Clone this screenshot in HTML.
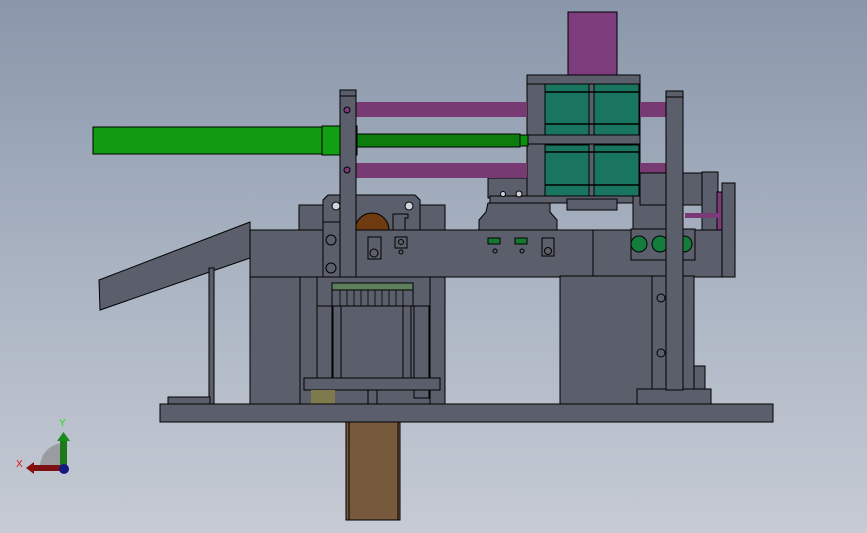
<!DOCTYPE html>
<html><head><meta charset="utf-8"><style>
html,body{margin:0;padding:0;width:867px;height:533px;overflow:hidden}
body{background:linear-gradient(#8a97aa 0%,#a9b3c2 50%,#c6cbd4 100%)}
svg{display:block}
</style></head><body>
<svg width="867" height="533" viewBox="0 0 867 533" xmlns="http://www.w3.org/2000/svg">
<g stroke="#000" stroke-width="1" fill="#5b5f6b">
<!-- top magenta block -->
<rect x="568" y="12" width="49" height="64" fill="#7d3d7c"/>
<!-- hopper back box -->
<rect x="488" y="178" width="45" height="20"/>
<!-- stack frame -->
<rect x="527" y="75" width="113" height="123"/>
<rect x="527" y="75" width="113" height="9"/>
<rect x="527" y="135" width="113" height="9"/>
<rect x="545" y="84" width="44" height="51" fill="#197560"/>
<rect x="594" y="84" width="45" height="51" fill="#197560"/>
<rect x="545" y="145" width="44" height="52" fill="#197560"/>
<rect x="594" y="145" width="45" height="52" fill="#197560"/>
<g stroke-width="1.5"><line x1="545" y1="92" x2="639" y2="92"/><line x1="545" y1="124" x2="639" y2="124"/><line x1="545" y1="152" x2="639" y2="152"/><line x1="545" y1="185" x2="639" y2="185"/></g>
<!-- purple rods -->
<rect x="355" y="102" width="172" height="15" fill="#783a72" stroke="none"/>
<rect x="640" y="102" width="26" height="15" fill="#783a72" stroke="none"/>
<rect x="355" y="163" width="172" height="15" fill="#783a72" stroke="none"/>
<rect x="640" y="163" width="26" height="15" fill="#783a72" stroke="none"/>
<!-- green cylinder -->
<rect x="93" y="127" width="229" height="27" fill="#119a12"/>
<rect x="322" y="126" width="35" height="29" fill="#11a012"/>
<rect x="357" y="134" width="163" height="13" fill="#0c7d0c"/>
<rect x="520" y="135" width="8" height="11" fill="#0c900c"/>
<!-- upper housing left -->
<rect x="299" y="205" width="24" height="25"/>
<rect x="415" y="205" width="30" height="25"/>
<path d="M323 230 V200 L328 195 H415 L420 200 V230Z"/>
<path d="M355 230 A17 17 0 0 1 389 230Z" fill="#6e3a10"/>
<path d="M393 214 H408 V218 H405 V230 H393Z"/>
<circle cx="336" cy="206" r="4" fill="#cfd3da"/><circle cx="409" cy="206" r="4" fill="#cfd3da"/>
<!-- hopper -->
<rect x="490" y="196" width="150" height="7"/>
<rect x="567" y="199" width="50" height="11"/>
<path d="M488 203 H550 L550 212 L557 220 V230 H479 V220 L486 212Z"/>
<circle cx="503" cy="194" r="2.5" fill="#cfd3da"/><circle cx="519" cy="194" r="3" fill="#cfd3da"/>
<!-- right mechanism -->
<rect x="633" y="196" width="50" height="34"/>
<rect x="640" y="173" width="67" height="32"/>
<rect x="702" y="172" width="16" height="58"/>
<rect x="722" y="183" width="13" height="94"/>
<rect x="717" y="192" width="5" height="40" fill="#7a3a78"/>
<rect x="685" y="213" width="33" height="5" fill="#7a3a78" stroke="none"/>
<!-- main beam -->
<rect x="250" y="230" width="343" height="47"/>
<rect x="593" y="230" width="129" height="47"/>
<rect x="631" y="229" width="64" height="31"/>
<circle cx="639" cy="244" r="8" fill="#147d3c"/><circle cx="660" cy="244" r="8" fill="#147d3c"/><circle cx="684" cy="244" r="8" fill="#147d3c"/>
<rect x="368" y="237" width="13" height="22"/><circle cx="374" cy="253" r="4"/>
<rect x="395" y="237" width="12" height="11"/><circle cx="401" cy="242" r="2.5"/><circle cx="401" cy="252" r="2"/>
<rect x="488" y="238" width="12" height="6" fill="#157a30"/><rect x="515" y="238" width="12" height="6" fill="#157a30"/>
<circle cx="495" cy="251" r="2"/><circle cx="522" cy="251" r="2"/>
<rect x="542" y="238" width="12" height="18"/><circle cx="548" cy="251" r="3.5"/>
<!-- chute -->
<path d="M99 280 L250 222 V258 L100 310Z"/>
<rect x="209" y="268" width="5" height="136"/>
<rect x="168" y="397" width="42" height="7"/>
<!-- columns -->
<rect x="250" y="277" width="50" height="127"/>
<rect x="300" y="277" width="17" height="127"/>
<rect x="317" y="277" width="113" height="127"/>
<rect x="430" y="277" width="15" height="127"/>
<rect x="317" y="306" width="15" height="92"/>
<rect x="414" y="306" width="15" height="92"/>
<rect x="332" y="283" width="81" height="7" fill="#5e7f5e"/>
<rect x="332" y="290" width="81" height="16"/>
<g stroke-width="0.8"><line x1="340" y1="290" x2="340" y2="306"/><line x1="347" y1="290" x2="347" y2="306"/><line x1="354" y1="290" x2="354" y2="306"/><line x1="361" y1="290" x2="361" y2="306"/><line x1="368" y1="290" x2="368" y2="306"/><line x1="375" y1="290" x2="375" y2="306"/><line x1="382" y1="290" x2="382" y2="306"/><line x1="389" y1="290" x2="389" y2="306"/><line x1="396" y1="290" x2="396" y2="306"/><line x1="403" y1="290" x2="403" y2="306"/></g>
<rect x="333" y="306" width="8" height="72"/><rect x="403" y="306" width="8" height="72"/>
<rect x="341" y="306" width="62" height="72"/>
<rect x="304" y="378" width="136" height="12"/>
<rect x="311" y="390" width="24" height="14" fill="#7e7a4e" stroke="none"/>
<rect x="368" y="390" width="9" height="14"/>
<!-- right block -->
<rect x="560" y="276" width="92" height="128"/>
<rect x="652" y="276" width="42" height="113"/>
<rect x="694" y="366" width="11" height="23"/>
<rect x="637" y="389" width="74" height="15"/>
<circle cx="661" cy="298" r="4" fill="none"/><circle cx="661" cy="353" r="4" fill="none"/>
<!-- posts -->
<rect x="340" y="90" width="16" height="187"/>
<rect x="340" y="90" width="16" height="6"/>
<circle cx="347" cy="110" r="3" fill="#7a3a78"/><circle cx="347" cy="170" r="3" fill="#7a3a78"/>
<rect x="323" y="222" width="17" height="55"/>
<circle cx="331" cy="240" r="5" fill="none"/><circle cx="331" cy="268" r="5" fill="none"/>
<rect x="666" y="91" width="17" height="299"/>
<rect x="666" y="91" width="17" height="6"/>
<!-- base -->
<rect x="160" y="404" width="613" height="18"/>
<rect x="346" y="422" width="54" height="98" fill="#77593c"/>
<line x1="349" y1="422" x2="349" y2="520"/><line x1="398" y1="422" x2="398" y2="520"/>
</g>
<!-- axis triad -->
<path d="M40 467 A24 24 0 0 1 64 443 V467Z" fill="#9a9ca2"/>
<rect x="60" y="440" width="7" height="28" fill="#1c7a1c"/>
<path d="M57 441 L63.5 432 L70 441Z" fill="#1c8a1c"/>
<rect x="33" y="465" width="30" height="6" fill="#7a1010"/>
<path d="M34 462 L26 468 L34 474Z" fill="#8a1010"/>
<circle cx="64" cy="469" r="5" fill="#161a80"/>
<text x="59" y="426" font-family="Liberation Sans,sans-serif" font-size="10" fill="#22dd22">Y</text>
<text x="16" y="467" font-family="Liberation Sans,sans-serif" font-size="10" fill="#dd1111">X</text>
</svg>
</body></html>
